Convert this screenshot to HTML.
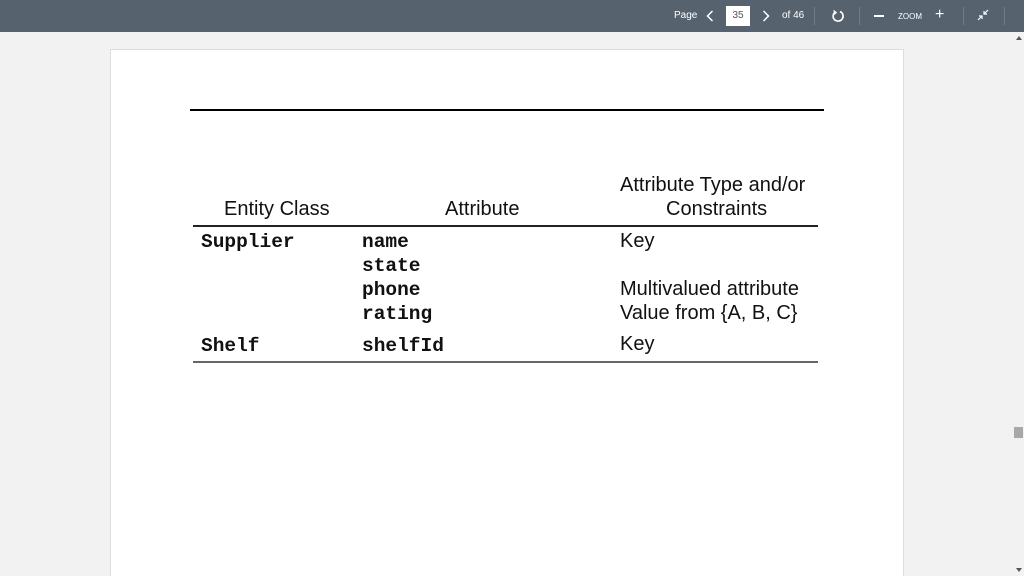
<!DOCTYPE html>
<html><head><meta charset="utf-8">
<style>
*{margin:0;padding:0;box-sizing:border-box}
html,body{width:1024px;height:576px;overflow:hidden}
body{background:#f2f2f2;position:relative;font-family:"Liberation Sans",sans-serif}
.bar{position:absolute;left:0;top:0;width:1024px;height:32px;background:#56636f;color:#fff}
.bar span{position:absolute;font-size:10px;top:10px}
.sep{position:absolute;top:7px;width:1px;height:18px;background:#6f7b86}
.page{position:absolute;left:110px;top:49px;width:794px;height:527px;background:#fff;border:1px solid #ddd;border-bottom:none}
.t{position:absolute;white-space:nowrap;color:#111}
.s{font-family:"Liberation Sans",sans-serif;font-size:20px}
.m{font-family:"Liberation Mono",monospace;font-weight:bold;font-size:19.5px}
.hr{position:absolute;background:#222}
</style></head><body>
<div class="bar">
<span style="left:674px">Page</span>
<svg style="position:absolute;left:706px;top:10px" width="8" height="12" viewBox="0 0 8 12"><path d="M6.5 1L1.5 6 6.5 11" fill="none" stroke="#fff" stroke-width="1.5"/></svg>
<div style="position:absolute;left:726px;top:6px;width:24px;height:20px;background:#fff;color:#555;font-size:10px;text-align:center;line-height:20px">35</div>
<svg style="position:absolute;left:762px;top:10px" width="8" height="12" viewBox="0 0 8 12"><path d="M1.5 1L6.5 6 1.5 11" fill="none" stroke="#fff" stroke-width="1.5"/></svg>
<span style="left:782px">of 46</span>
<div class="sep" style="left:814px"></div>
<svg style="position:absolute;left:831px;top:9px" width="14" height="14" viewBox="0 0 14 14"><path d="M4 3.2A5 5 0 1 0 9 2.5" fill="none" stroke="#fff" stroke-width="1.6"/><path d="M2.5 1.5L5 3.5 3 5.5" fill="none" stroke="#fff" stroke-width="1.4"/></svg>
<div class="sep" style="left:859px"></div>
<div style="position:absolute;left:874px;top:15px;width:10px;height:1.5px;background:#fff"></div>
<span style="left:898px;font-size:8px;top:12px">ZOOM</span>
<span style="left:935px;top:6px;font-size:16px">+</span>
<div class="sep" style="left:963px"></div>
<svg style="position:absolute;left:977px;top:9px" width="12" height="12" viewBox="0 0 12 12"><path d="M1 11L5 7M2 7H5V10M11 1L7 5M7 2V5H10" fill="none" stroke="#fff" stroke-width="1.2"/></svg>
<div class="sep" style="left:1004px"></div>
</div>
<div class="page"></div>
<div class="hr" style="left:190px;top:109px;width:634px;height:2px;background:#000"></div>
<div class="t s" style="left:224px;top:198px">Entity Class</div>
<div class="t s" style="left:445px;top:198px">Attribute</div>
<div class="t s" style="left:620px;top:174px">Attribute Type and/or</div>
<div class="t s" style="left:666px;top:198px">Constraints</div>
<div class="hr" style="left:193px;top:225px;width:625px;height:1.5px"></div>
<div class="t m" style="left:201px;top:231px">Supplier</div>
<div class="t m" style="left:362px;top:231px">name</div>
<div class="t m" style="left:362px;top:255px">state</div>
<div class="t m" style="left:362px;top:279px">phone</div>
<div class="t m" style="left:362px;top:303px">rating</div>
<div class="t m" style="left:201px;top:335px">Shelf</div>
<div class="t m" style="left:362px;top:335px">shelfId</div>
<div class="t s" style="left:620px;top:230px">Key</div>
<div class="t s" style="left:620px;top:278px">Multivalued attribute</div>
<div class="t s" style="left:620px;top:302px">Value from {A, B, C}</div>
<div class="t s" style="left:620px;top:333px">Key</div>
<div class="hr" style="left:193px;top:361px;width:625px;height:1.5px;background:#666"></div>
<div style="position:absolute;left:1014px;top:427px;width:9px;height:11px;background:#a8a8a8"></div>
<div style="position:absolute;left:1016px;top:36px;width:0;height:0;border-left:3px solid transparent;border-right:3px solid transparent;border-bottom:4px solid #555"></div>
<div style="position:absolute;left:1016px;top:568px;width:0;height:0;border-left:3px solid transparent;border-right:3px solid transparent;border-top:4px solid #555"></div>
</body></html>
